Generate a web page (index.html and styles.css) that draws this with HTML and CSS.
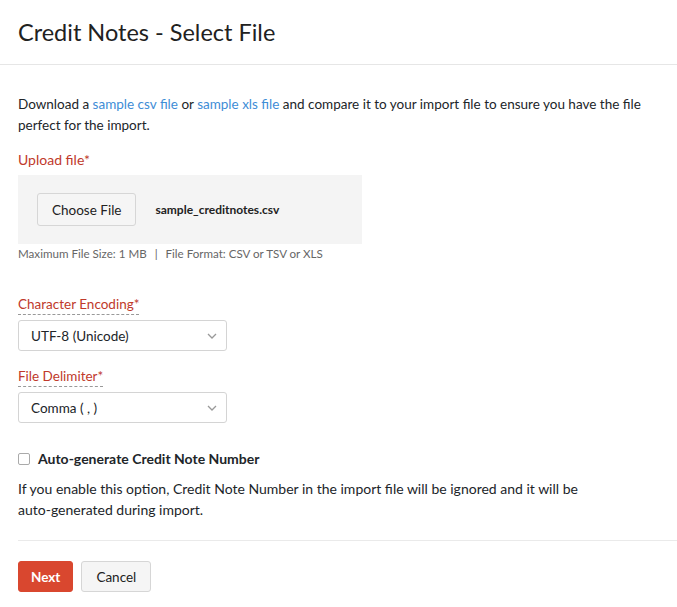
FILE: index.html
```html
<!DOCTYPE html>
<html lang="en">
<head>
    <meta charset="UTF-8">
    <title>Credit Notes - Select File</title>
    <link rel="stylesheet" href="styles.css">
</head>
<body>

    <div class="page-header">
        <h1>Credit Notes - Select File</h1>
    </div>

    <div class="content">
        <p class="intro">
            Download a <a href="#">sample csv file</a> or <a href="#">sample xls file</a> and compare it to your import file to ensure you have the file perfect for the import.
        </p>

        <div class="field">
            <label class="field-label">Upload file*</label>
            <div class="upload-box">
                <button class="btn btn-light">Choose File</button>
                <span class="file-name">sample_creditnotes.csv</span>
            </div>
            <div class="help-text">Maximum File Size: 1 MB <span class="sep">|</span> File Format: CSV or TSV or XLS</div>
        </div>

        <div class="field field-select">
            <label class="field-label dashed">Character Encoding*</label>
            <div class="select">
                <span>UTF-8 (Unicode)</span>
                <svg width="12" height="8" viewBox="0 0 12 8"><path d="M2 2l4 4 4-4" fill="none" stroke="#999" stroke-width="1.3"/></svg>
            </div>
        </div>

        <div class="field field-select">
            <label class="field-label dashed">File Delimiter*</label>
            <div class="select">
                <span>Comma ( , )</span>
                <svg width="12" height="8" viewBox="0 0 12 8"><path d="M2 2l4 4 4-4" fill="none" stroke="#999" stroke-width="1.3"/></svg>
            </div>
        </div>

        <div class="check-row">
            <span class="checkbox"></span>
            <label>Auto-generate Credit Note Number</label>
        </div>
        <p class="check-note">
            If you enable this option, Credit Note Number in the import file will be ignored and it will be<br>auto-generated during import.
        </p>
    </div>

    <div class="footer">
        <button class="btn btn-primary">Next</button>
        <button class="btn btn-light btn-cancel">Cancel</button>
    </div>

</body>
</html>
```

FILE: styles.css
```css
* {
    box-sizing: border-box;
}

body {
    margin: 0;
    font-family: Lato, 'Liberation Sans', sans-serif;
    color: #212529;
    background: #fff;
    font-size: 13px;
}

.page-header {
    height: 65px;
    border-bottom: 1px solid #e6e6e6;
    padding: 18px 18px 0;
}

.page-header h1 {
    margin: 0;
    font-size: 23.5px;
    font-weight: 400;
    color: #212121;
}

.content {
    padding: 29px 18px 0;
}

.intro {
    margin: 0 0 15px;
    line-height: 21px;
    font-size: 13.5px;
}

.intro a {
    color: #408dd6;
    text-decoration: none;
}

.field-label {
    display: inline-block;
    color: #c0392b;
    font-size: 14px;
    margin-bottom: 7px;
}

.field-label.dashed {
    border-bottom: 1px dashed #999;
    padding-bottom: 2px;
    margin-bottom: 5px;
    font-size: 13.5px;
}

.upload-box {
    width: 344px;
    height: 69px;
    background: #f4f4f4;
    display: flex;
    align-items: center;
    padding-left: 19px;
    gap: 19px;
}

.file-name {
    font-size: 12px;
    font-weight: 700;
    color: #222;
}

.help-text {
    margin-top: 3px;
    font-size: 11.6px;
    color: #666;
}

.help-text .sep {
    margin: 0 5px;
}

.field-select {
    margin-top: 36px;
}

.field-select + .field-select {
    margin-top: 17px;
}

.select {
    width: 209px;
    height: 31px;
    border: 1px solid #d4d4d4;
    border-radius: 3px;
    display: flex;
    align-items: center;
    justify-content: space-between;
    padding: 0 8px 0 12px;
    font-size: 13.5px;
}

.check-row {
    margin-top: 27px;
    display: flex;
    align-items: center;
    gap: 8px;
}

.checkbox {
    width: 12px;
    height: 12px;
    border: 1px solid #aaa;
    border-radius: 2px;
}

.check-row label {
    font-weight: 700;
    font-size: 14px;
}

.check-note {
    margin: 11px 0 0;
    line-height: 21px;
    font-size: 14px;
}

.footer {
    margin: 20px 0 0 18px;
    border-top: 1px solid #eaeaea;
    padding-top: 20px;
    display: flex;
    gap: 8px;
}

.btn {
    font-family: inherit;
    font-size: 13.5px;
    height: 31px;
    padding: 0 12px;
    border-radius: 3px;
    cursor: pointer;
}

.btn-light {
    background: #f5f5f5;
    border: 1px solid #d6d6d6;
    color: #222;
}

.btn-cancel {
    padding: 0 14px;
}

.upload-box .btn-light {
    height: 33px;
    padding: 0 14px;
}

.btn-primary {
    background: #d9472f;
    border: 1px solid #d9472f;
    color: #fff;
    font-weight: 700;
}
```
